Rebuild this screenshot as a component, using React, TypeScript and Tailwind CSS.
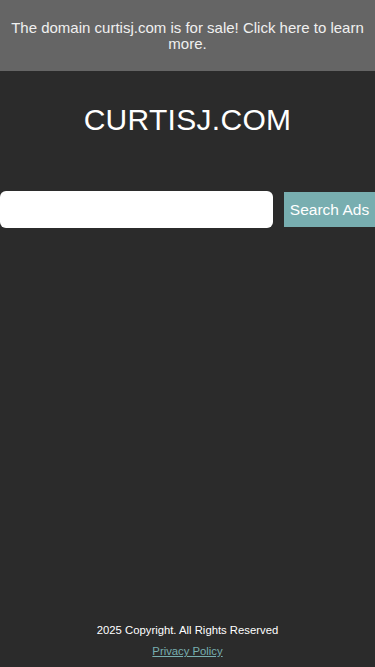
import React from "react";

export default function App() {
  return (
    <div className="min-h-[667px] bg-[#2b2b2b] flex flex-col" style={{ fontFamily: '"Liberation Sans", Arial, sans-serif' }}>
      <div className="bg-[#656565] h-[71px] flex items-center justify-center px-[6px] text-center text-[15px] leading-[16px] text-[#f0f0f0]">
        The domain curtisj.com is for sale! Click here to learn more.
      </div>
      <div className="pt-[32px] text-center text-white text-[30px] leading-[34px] tracking-[0.3px]">CURTISJ.COM</div>
      <div className="mt-[54px] flex items-center justify-between">
        <div className="w-[273px] h-[37px] bg-white rounded-[6px]" />
        <div className="w-[91px] h-[35px] bg-[#78aeb0] text-white text-[15.5px] flex items-center justify-center">Search Ads</div>
      </div>
      <div className="flex-1" />
      <div className="text-center text-white text-[11.3px] leading-[13px] pb-[9px]">
        <div>2025 Copyright. All Rights Reserved</div>
        <div className="mt-[8px] text-[#78aeb0] underline">Privacy Policy</div>
      </div>
    </div>
  );
}
